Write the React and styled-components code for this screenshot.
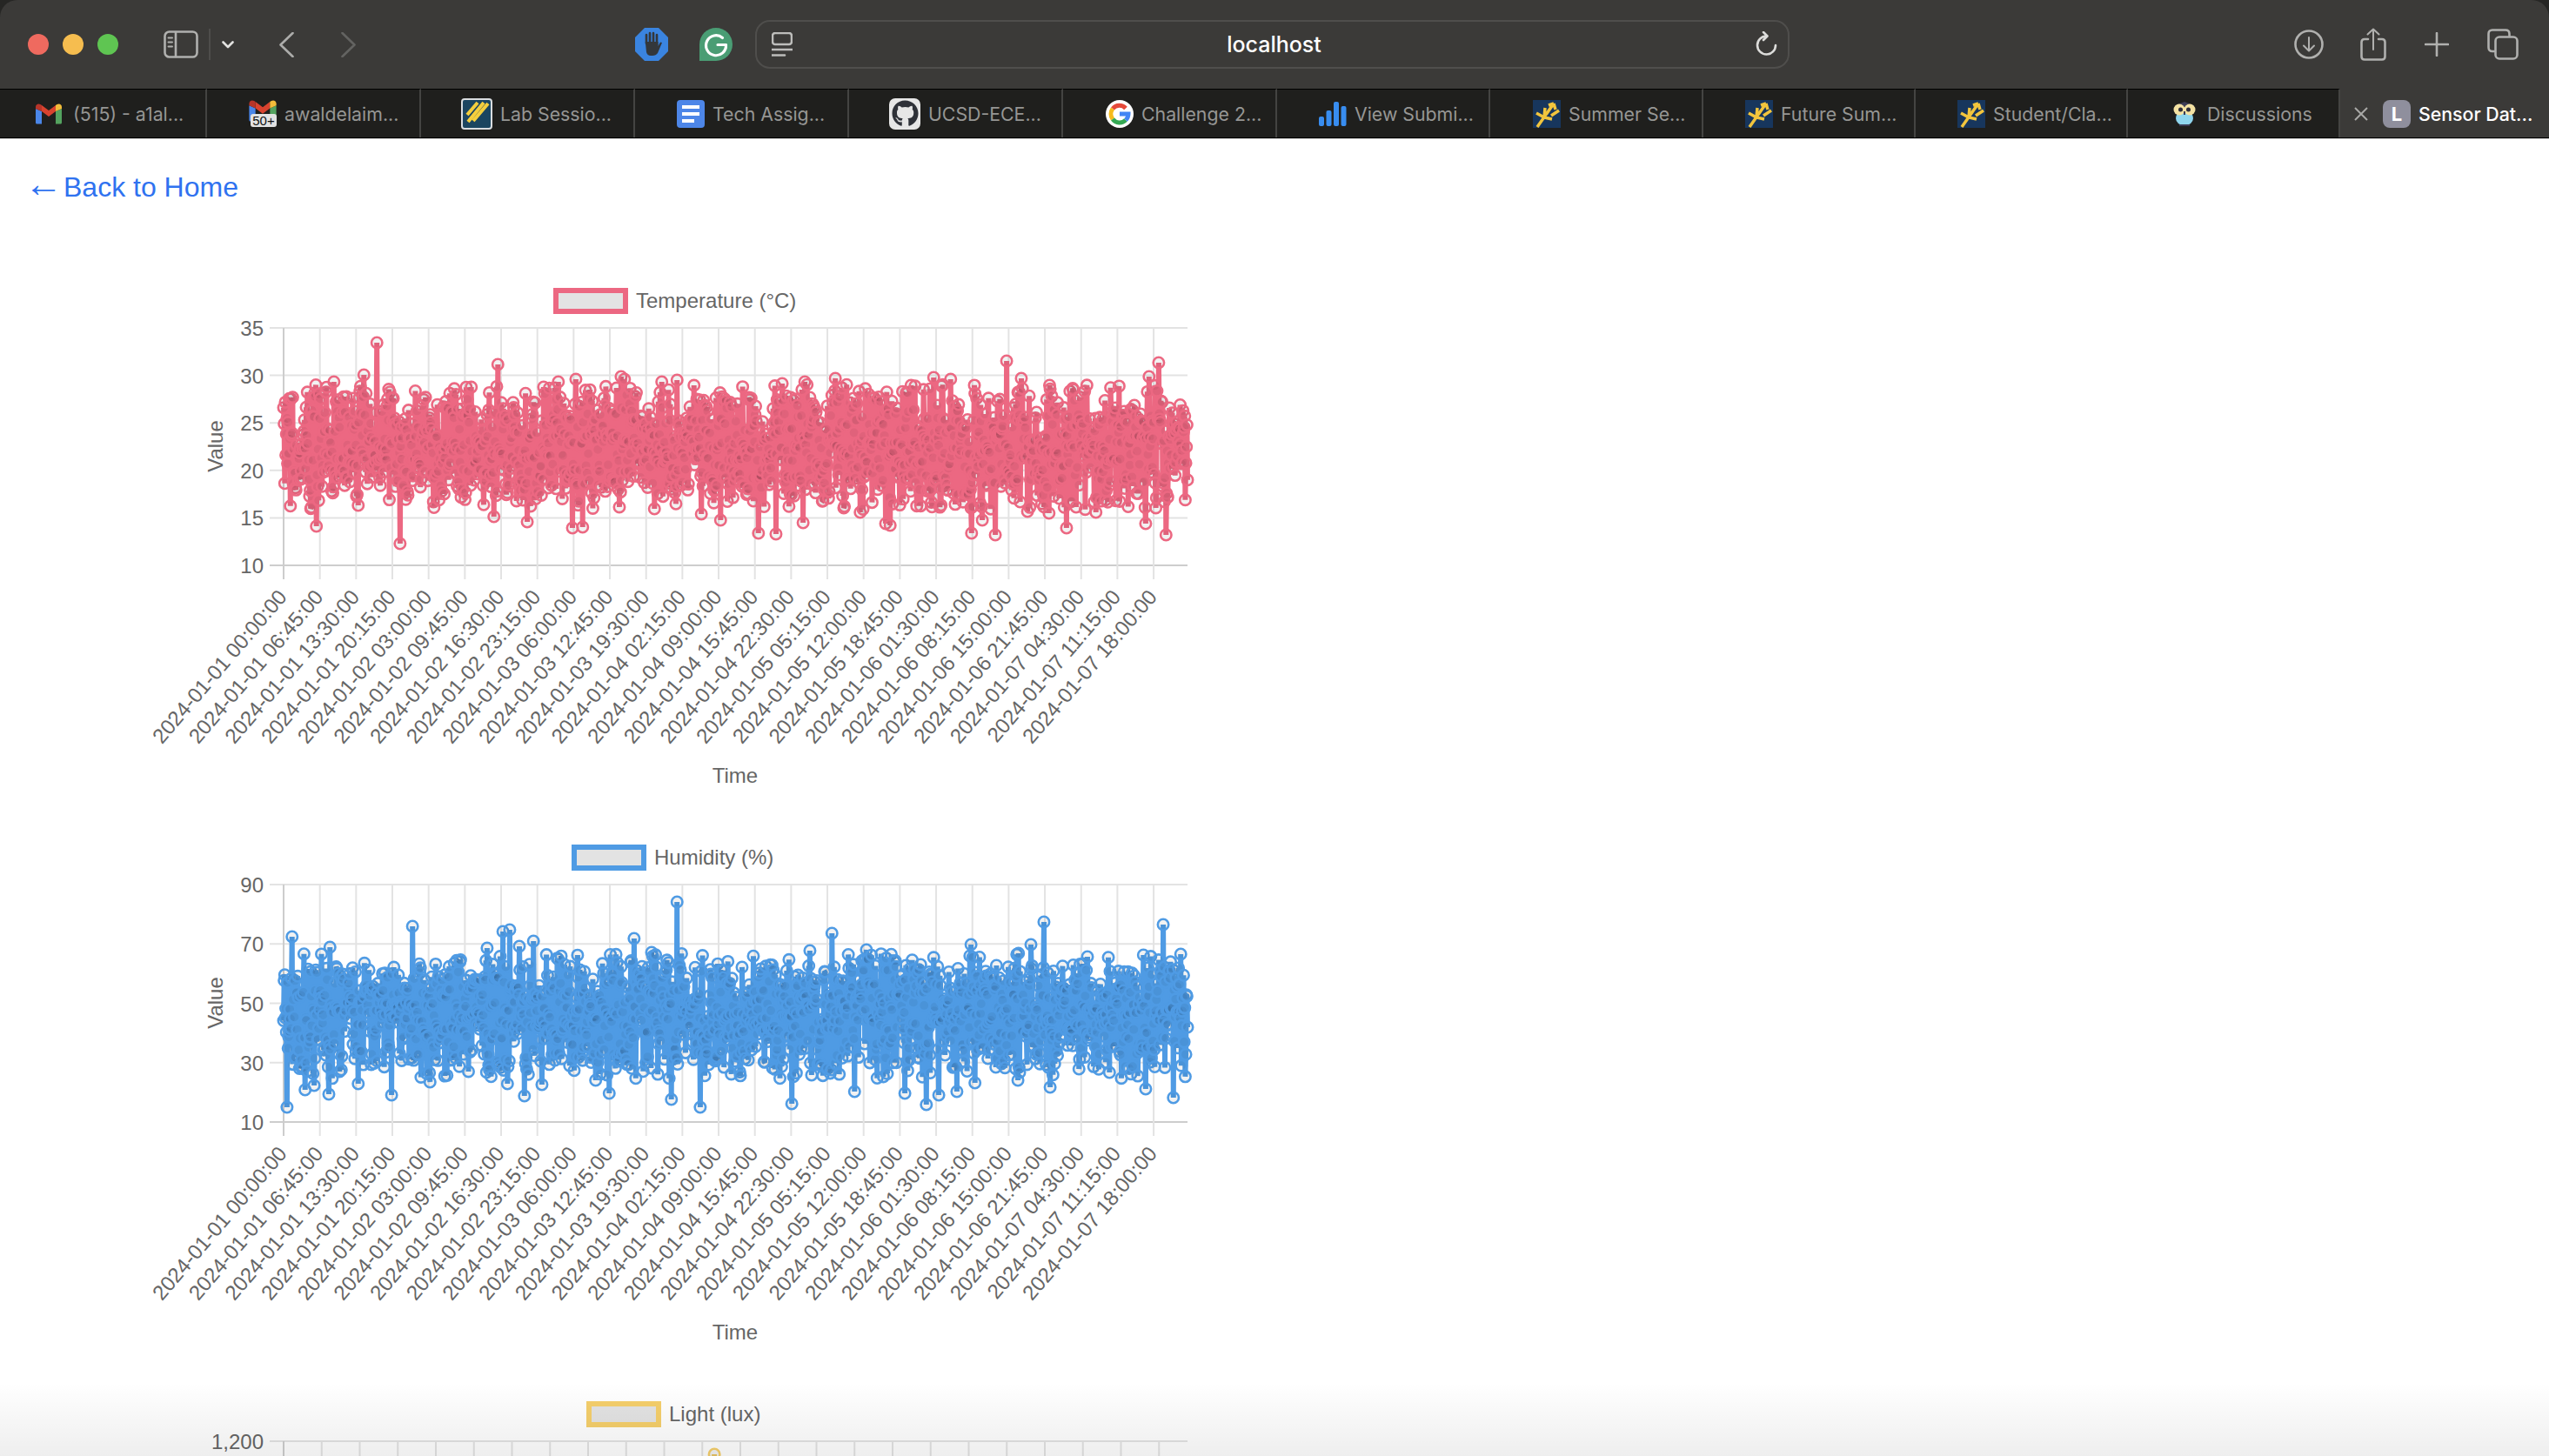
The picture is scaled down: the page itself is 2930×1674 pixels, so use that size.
import React, { useMemo } from "react";
import styled, { createGlobalStyle } from "styled-components";
import { FaGithub } from "react-icons/fa";

const GlobalStyle = createGlobalStyle`
    html, body {
        margin: 0;
        padding: 0;
        background: #ffffff;
        overflow: hidden;
    }
`;

const Window = styled.div`
    position: relative;
    display: flex;
    flex-direction: column;
    width: 2930px;
    height: 1674px;
    overflow: hidden;
    background: #262624;
    font-family: "Liberation Sans", Arial, sans-serif;
`;

const Toolbar = styled.header`
    flex: none;
    display: flex;
    align-items: center;
    height: 102px;
    padding-left: 32px;
    background: #3b3a38;
    border-radius: 20px 20px 0 0;
`;

const Lights = styled.div`
    display: flex;
    gap: 16px;
`;

const Light = styled.span`
    width: 24px;
    height: 24px;
    border-radius: 50%;
    background: ${props => props.$color};
`;

const ToolIcon = styled.svg`
    flex: none;
    display: block;
    margin-left: ${props => props.$left}px;
    fill: none;
    stroke: ${props => props.$stroke || "#b0b0ae"};
    stroke-width: 2.6;
    stroke-linecap: round;
    stroke-linejoin: round;
`;

const Divider = styled.span`
    flex: none;
    width: 2px;
    height: 36px;
    margin-left: 12px;
    background: #4e4d4b;
`;

const UrlBar = styled.div`
    flex: none;
    display: flex;
    align-items: center;
    box-sizing: border-box;
    width: 1189px;
    height: 56px;
    margin-left: 26px;
    padding: 0 11px 0 17px;
    border: 2px solid #4f4e4c;
    border-radius: 17px;
`;

const UrlText = styled.span`
    flex: 1;
    text-align: center;
    color: #ffffff;
    font-family: Inter, "Liberation Sans", sans-serif;
    font-size: 25px;
    font-weight: 500;
`;

const TabStrip = styled.nav`
    flex: none;
    display: grid;
    grid-template-columns: 238px 246px 246px 246px 246px 246px 245px 245px 244px 244px 244px 1fr;
    height: 57px;
    box-sizing: border-box;
    border-bottom: 1px solid #000000;
    box-shadow: 0 1px 0 #cfcfcf;
    z-index: 1;
`;

const Tab = styled.div`
    display: flex;
    align-items: center;
    gap: ${props => props.$gap || 9}px;
    min-width: 0;
    padding-left: ${props => props.$inset || 48}px;
    border-top: 1px solid ${props => (props.$active ? "#3b3a38" : "#000000")};
    border-right: ${props => (props.$active ? "none" : "2px solid #444442")};
    background: ${props => (props.$active ? "#3b3a38" : "#1f1f1d")};
    color: ${props => (props.$active ? "#ffffff" : "#969694")};
    font-family: Inter, "Liberation Sans", sans-serif;
    font-size: 21.3px;
    font-weight: ${props => (props.$active ? 500 : 400)};
    white-space: nowrap;
`;

const CloseMark = styled.svg`
    flex: none;
    margin-right: 8px;
    stroke: #a8a8a6;
    stroke-width: 2;
`;

const Favicon = styled.svg`
    flex: none;
    display: block;
`;

const GithubBadge = styled.span`
    flex: none;
    display: flex;
    align-items: center;
    justify-content: center;
    width: 36px;
    height: 36px;
    border-radius: 7px;
    background: #e6e6e6;
    color: #2e3138;
    font-size: 31px;
`;

const LetterBadge = styled.span`
    flex: none;
    display: flex;
    align-items: center;
    justify-content: center;
    width: 32px;
    height: 32px;
    border-radius: 8px;
    background: #8f8f9d;
    color: #ffffff;
    font-size: 22px;
    font-weight: 700;
`;

const MailBadge = styled.span`
    position: relative;
    flex: none;
    width: 32px;
    height: 31px;
`;

const MailCount = styled.span`
    position: absolute;
    left: 2px;
    bottom: 0;
    width: 30px;
    height: 15px;
    border-radius: 3px;
    background: #e2e2e2;
    color: #111111;
    font-family: "Liberation Sans", sans-serif;
    font-size: 15px;
    line-height: 15px;
    text-align: center;
`;

const Page = styled.main`
    flex: 1;
    min-height: 0;
    margin-top: 1px;
    overflow: hidden;
    background: #ffffff;
`;

const LinkRow = styled.div`
    box-sizing: border-box;
    height: 160px;
    padding: 37px 0 0 28px;
`;

const BackLink = styled.a`
    display: inline-flex;
    align-items: baseline;
    gap: 1px;
    color: #2f72f0;
    font-size: 32px;
    line-height: 37px;
    text-decoration: none;
`;

const BackArrow = styled.span`
    font-size: 44px;
    line-height: 0;
`;

const ChartSvg = styled.svg`
    display: block;
    width: 1400px;
    height: 640px;
`;

const ChartText = styled.text`
    fill: #666666;
    font-family: "Liberation Sans", Arial, sans-serif;
    font-size: 24px;
`;

const BottomFade = styled.div`
    position: absolute;
    left: 0;
    right: 0;
    bottom: 0;
    height: 84px;
    background: linear-gradient(rgba(0, 0, 0, 0), rgba(0, 0, 0, 0.065));
    pointer-events: none;
`;

const PLOT_LEFT = 326;
const PLOT_RIGHT = 1365;
const PLOT_TOP = 57;
const PLOT_BOTTOM = 330;
const POINTS = 1600;

function makeRandom(seed) {
    let state = seed;
    return () => {
        state = (state + 0x6d2b79f5) | 0;
        let t = Math.imul(state ^ (state >>> 15), 1 | state);
        t = (t + Math.imul(t ^ (t >>> 7), 61 | t)) ^ t;
        return ((t ^ (t >>> 14)) >>> 0) / 4294967296;
    };
}

// noisy band plus the spikes read off the screenshot, all in chart pixels
function buildSeries({ seed, mean, spread, low, high, peaks, pageTop }) {
    const random = makeRandom(seed);
    const step = (PLOT_RIGHT - PLOT_LEFT) / (POINTS - 1);
    const series = [];
    for (let i = 0; i < POINTS; i++) {
        let y = low - 1;
        while (y < low || y > high) {
            const gauss =
                Math.sqrt(-2 * Math.log(1 - random())) *
                Math.cos(2 * Math.PI * random());
            y = mean + gauss * spread;
        }
        series.push([PLOT_LEFT + i * step, y]);
    }
    peaks.forEach(([x, y]) => {
        const index = Math.round((x - PLOT_LEFT) / step);
        series[index] = [series[index][0], y - pageTop];
    });
    return series;
}

function buildTimeLabels() {
    const start = Date.UTC(2024, 0, 1);
    return Array.from({ length: 25 }, (_, i) =>
        new Date(start + i * 405 * 60000)
            .toISOString()
            .slice(0, 19)
            .replace("T", " ")
    );
}

const Chart = ({ title, color, legendLeft, ticks, gridStep, gridCount, labels, band }) => {
    const series = useMemo(() => buildSeries(band), [band]);
    const line = series.map(([x, y], i) => `${i ? "L" : "M"}${x.toFixed(1)} ${y.toFixed(1)}`).join("");

    return (
        <ChartSvg viewBox="0 0 1400 640">
            <rect x={legendLeft + 3} y="14" width="80" height="24" fill="#e3e3e3" stroke={color} strokeWidth="6" />
            <ChartText x={legendLeft + 95} y="34">{title}</ChartText>

            {ticks.map(tick => (
                <g key={tick.label}>
                    <line x1="310" x2={PLOT_RIGHT} y1={tick.y} y2={tick.y} stroke={tick.y === PLOT_BOTTOM ? "#cdcdcd" : "#e3e3e3"} strokeWidth="2" />
                    <ChartText x="303" y={tick.y + 9} textAnchor="end">{tick.label}</ChartText>
                </g>
            ))}
            {Array.from({ length: gridCount }, (_, i) => (
                <line
                    key={i}
                    x1={PLOT_LEFT + i * gridStep}
                    x2={PLOT_LEFT + i * gridStep}
                    y1={PLOT_TOP}
                    y2="346"
                    stroke={i === 0 ? "#cdcdcd" : "#e3e3e3"}
                    strokeWidth="2"
                />
            ))}

            <path d={line} fill="none" stroke={color} strokeWidth="6" strokeLinejoin="bevel" />
            {series.map(([x, y], i) => (
                <circle key={i} cx={x} cy={y} r="6.2" fill="rgba(0,0,0,0.05)" stroke={color} strokeWidth="2.6" />
            ))}

            {labels.map((label, i) => {
                const x = PLOT_LEFT + i * gridStep + 5;
                return (
                    <ChartText key={label} x={x} y="367" textAnchor="end" transform={`rotate(-49.5 ${x} 367)`}>
                        {label}
                    </ChartText>
                );
            })}
            {labels.length > 0 && (
                <>
                    <ChartText x="256" y="193" textAnchor="middle" transform="rotate(-90 256 193)">Value</ChartText>
                    <ChartText x="845" y="580" textAnchor="middle">Time</ChartText>
                </>
            )}
        </ChartSvg>
    );
};

const GmailIcon = ({ width = 30, height = 24 }) => (
    <Favicon width={width} height={height} viewBox="0 0 30 24">
        <path d="M0 6V22Q0 23.500 1.500 23.500H7V9Z" fill="#4a86e8" />
        <path d="M23 9V23.500H28.500Q30 23.500 30 22V6Z" fill="#54a35f" />
        <path d="M7 9L15 15L23 9V2L15 8L7 2Z" fill="#d8432f" />
        <path d="M0 6V4C0 1 3 -0.500 5.500 1L7 2V9Z" fill="#b7352a" />
        <path d="M30 6V4C30 1 27 -0.500 24.500 1L23 2V9Z" fill="#f3bc3a" />
    </Favicon>
);

const LabIcon = () => (
    <Favicon width="36" height="36" viewBox="0 0 36 36">
        <rect x="1" y="1" width="34" height="34" rx="3" fill="#1b4560" stroke="#d9dde0" strokeWidth="2" />
        <path d="M8 27L26 5M14 26L31 6M7 19L19 5" stroke="#f4cf3d" strokeWidth="4" />
    </Favicon>
);

const DocsIcon = () => (
    <Favicon width="32" height="32" viewBox="0 0 32 32">
        <rect width="32" height="32" rx="4" fill="#4d86e8" />
        <path d="M6 8H26M6 16H26M6 24H20" stroke="#ffffff" strokeWidth="4" />
    </Favicon>
);

const GoogleIcon = () => (
    <Favicon width="32" height="32" viewBox="0 0 32 32">
        <circle cx="16" cy="16" r="16" fill="#ffffff" />
        <path d="M23 9.500A10 10 0 0 0 8 10" fill="none" stroke="#e5493a" strokeWidth="5" />
        <path d="M8 10A10 10 0 0 0 8 22" fill="none" stroke="#f6bb1b" strokeWidth="5" />
        <path d="M8 22A10 10 0 0 0 23 23" fill="none" stroke="#34a853" strokeWidth="5" />
        <path d="M23 23A10 10 0 0 0 26 16H16" fill="none" stroke="#4285f4" strokeWidth="5" />
    </Favicon>
);

const BarsIcon = () => (
    <Favicon width="32" height="28" viewBox="0 0 32 28" fill="#388df0">
        <rect x="0" y="17" width="6" height="11" rx="2" />
        <rect x="8.500" y="10" width="6" height="18" rx="2" />
        <rect x="17" y="0" width="6" height="28" rx="2" />
        <rect x="25.500" y="5" width="6" height="23" rx="2" />
    </Favicon>
);

const TridentIcon = () => (
    <Favicon width="32" height="32" viewBox="0 0 32 32">
        <rect width="32" height="32" fill="#17365d" />
        <path d="M5 31L24 4M24 4L18 6M24 4L26 11M14 9L13 20L22 22M30 12L21 18M4 15L13 20" fill="none" stroke="#f2c53d" strokeWidth="3.500" />
    </Favicon>
);

const OwlIcon = () => (
    <Favicon width="28" height="29" viewBox="0 0 28 29">
        <path d="M3 5L14 1L25 5V15H3Z" fill="#3c3c54" />
        <ellipse cx="14" cy="20" rx="10" ry="8.500" fill="#8fd6ee" />
        <ellipse cx="8" cy="10" rx="6.500" ry="6.500" fill="#f4e2a2" />
        <ellipse cx="20" cy="10" rx="6.500" ry="6.500" fill="#f4e2a2" />
        <circle cx="9.500" cy="10" r="2.500" fill="#2d2d3c" />
        <circle cx="18.500" cy="10" r="2.500" fill="#2d2d3c" />
        <path d="M14 12V16M8 28H20" stroke="#3c3c54" strokeWidth="2" />
    </Favicon>
);

const TABS = [
    { title: "(515) - a1al...", icon: <GmailIcon />, inset: 41, gap: 13 },
    {
        title: "awaldelaim...",
        icon: (
            <MailBadge>
                <GmailIcon width={32} height={25} />
                <MailCount>50+</MailCount>
            </MailBadge>
        ),
    },
    { title: "Lab Sessio...", icon: <LabIcon />, inset: 46 },
    { title: "Tech Assig...", icon: <DocsIcon /> },
    { title: "UCSD-ECE...", icon: <GithubBadge><FaGithub /></GithubBadge>, inset: 46 },
    { title: "Challenge 2...", icon: <GoogleIcon />, inset: 49 },
    { title: "View Submi...", icon: <BarsIcon /> },
    { title: "Summer Se...", icon: <TridentIcon />, inset: 49 },
    { title: "Future Sum...", icon: <TridentIcon /> },
    { title: "Student/Cla...", icon: <TridentIcon /> },
    { title: "Discussions", icon: <OwlIcon />, inset: 51, gap: 12 },
];

const TEMP_PEAKS = [
    [433, 394], [572, 419], [460, 625], [364, 605], [658, 607], [670, 606], [872, 613], [892, 614],
    [418, 431], [714, 433], [718, 436], [384, 439], [662, 436], [761, 439], [778, 437], [899, 441],
    [625, 445], [642, 439], [606, 600], [568, 594], [806, 591], [828, 598], [1157, 415], [1332, 417],
    [960, 435], [1073, 434], [1093, 436], [1174, 435], [1321, 433], [989, 438], [925, 439], [1234, 448],
    [923, 601], [1018, 602], [1023, 604], [1117, 613], [1144, 615], [1340, 615], [1226, 607], [1317, 602],
    [1129, 598], [989, 589], [970, 584], [1181, 588], [1206, 590], [1260, 589],
];

const HUMIDITY_PEAKS = [
    [336, 1077], [379, 1089], [474, 1065], [578, 1071], [586, 1069], [613, 1082], [560, 1090], [597, 1088],
    [729, 1079], [778, 1037], [749, 1095], [330, 1273], [351, 1253], [361, 1248], [378, 1258], [412, 1246],
    [450, 1259], [494, 1244], [583, 1246], [603, 1260], [623, 1247], [700, 1257], [685, 1242], [772, 1264],
    [805, 1273], [1200, 1060], [1337, 1063], [956, 1073], [931, 1093], [996, 1092], [1116, 1086], [1185, 1086],
    [1171, 1096], [1357, 1097], [910, 1269], [982, 1255], [1040, 1257], [1065, 1270], [1079, 1259], [1100, 1255],
    [1317, 1252], [1349, 1262], [1207, 1250], [1170, 1242], [1121, 1245],
];

const TIME_LABELS = buildTimeLabels();

const CHARTS = [
    {
        title: "Temperature (°C)",
        color: "#ec6882",
        legendLeft: 636,
        gridStep: 41.67,
        gridCount: 25,
        labels: TIME_LABELS,
        ticks: ["35", "30", "25", "20", "15", "10"].map((label, i) => ({ label, y: PLOT_TOP + i * 54.6 })),
        band: { seed: 21, mean: 195, spread: 46, low: 122, high: 266, peaks: TEMP_PEAKS, pageTop: 320 },
    },
    {
        title: "Humidity (%)",
        color: "#4f9be4",
        legendLeft: 657,
        gridStep: 41.67,
        gridCount: 25,
        labels: TIME_LABELS,
        ticks: ["90", "70", "50", "30", "10"].map((label, i) => ({ label, y: PLOT_TOP + i * 68.25 })),
        band: { seed: 7, mean: 207, spread: 46, low: 136, high: 280, peaks: HUMIDITY_PEAKS, pageTop: 960 },
    },
    {
        title: "Light (lux)",
        color: "#f5cf6b",
        legendLeft: 674,
        gridStep: 43.75,
        gridCount: 24,
        labels: [],
        ticks: [{ label: "1,200", y: PLOT_TOP }],
        band: { seed: 3, mean: 240, spread: 20, low: 200, high: 300, peaks: [[821, 1672]], pageTop: 1600 },
    },
];

const App = () => {
    return (
        <Window>
            <GlobalStyle />
            <Toolbar>
                <Lights>
                    <Light $color="#ef6a5f" />
                    <Light $color="#f6bd4f" />
                    <Light $color="#5fc552" />
                </Lights>

                <ToolIcon $left={52} width="40" height="32" viewBox="0 0 40 32">
                    <rect x="1.500" y="1.500" width="37" height="29" rx="5" />
                    <path d="M14 2V30" />
                    <path d="M5.500 8.500H10M5.500 13.500H10M5.500 18.500H10" strokeWidth="2" />
                </ToolIcon>
                <Divider />
                <ToolIcon $left={13} $stroke="#e2e2e0" width="14" height="9" viewBox="0 0 14 9" strokeWidth="3">
                    <path d="M1.500 1.500L7 7L12.500 1.500" />
                </ToolIcon>
                <ToolIcon $left={52} $stroke="#acacaa" width="17" height="29" viewBox="0 0 17 29">
                    <path d="M15.500 1L1.500 14.500L15.500 28" />
                </ToolIcon>
                <ToolIcon $left={54} $stroke="#636361" width="17" height="29" viewBox="0 0 17 29">
                    <path d="M1.500 1L15.500 14.500L1.500 28" />
                </ToolIcon>

                <ToolIcon $left={321} $stroke="none" width="38" height="38" viewBox="0 0 38 38">
                    <path d="M11 0H27L38 11V27L27 38H11L0 27V11Z" fill="#3a84e0" />
                    <path d="M13 8V18M17 6V18M21 6V18M25 8V20" stroke="#33373b" strokeWidth="2.600" />
                    <path d="M11.800 16H26.500V21L29 16.500L31 17L26 29Q24 32 20 32H18Q14 32 13 28Z" fill="#33373b" />
                </ToolIcon>
                <ToolIcon $left={36} $stroke="none" width="38" height="38" viewBox="0 0 38 38">
                    <path d="M19 0A19 19 0 0 1 19 38H0V19A19 19 0 0 1 19 0Z" fill="#4a9d74" />
                    <path d="M26.500 11.500A11.500 11.500 0 1 0 30.500 19.500H21" fill="none" stroke="#ffffff" strokeWidth="3.200" />
                </ToolIcon>

                <UrlBar>
                    <ToolIcon $left={0} $stroke="#bdbdbb" width="24" height="28" viewBox="0 0 24 28" strokeWidth="2">
                        <rect x="1" y="1" width="22" height="13" rx="3" />
                        <path d="M0.500 20H23.500M0.500 26.500H15" />
                    </ToolIcon>
                    <UrlText>localhost</UrlText>
                    <ToolIcon $left={0} $stroke="#dcdcda" width="26" height="30" viewBox="0 0 26 30" strokeWidth="2">
                        <path d="M23 16A10.500 10.500 0 1 1 12.500 5.500M9 1L13.500 5.500L9 10" />
                    </ToolIcon>
                </UrlBar>

                <ToolIcon $left={580} width="34" height="34" viewBox="0 0 34 34">
                    <circle cx="17" cy="17" r="15.500" />
                    <path d="M17 9V24M11 18.500L17 24.500L23 18.500" strokeWidth="2" />
                </ToolIcon>
                <ToolIcon $left={42} width="30" height="38" viewBox="0 0 30 38">
                    <path d="M9 13H5Q1.500 13 1.500 16.500V33Q1.500 36.500 5 36.500H25Q28.500 36.500 28.500 33V16.500Q28.500 13 25 13H21" />
                    <path d="M15 25V1.500M8.500 7.500L15 1.500L21.500 7.500" strokeWidth="2" />
                </ToolIcon>
                <ToolIcon $left={44} width="28" height="28" viewBox="0 0 28 28">
                    <path d="M14 1V27M1 14H27" />
                </ToolIcon>
                <ToolIcon $left={44} width="36" height="36" viewBox="0 0 36 36">
                    <path d="M8 26H6Q1.500 26 1.500 21.500V6Q1.500 1.500 6 1.500H21Q25.500 1.500 25.500 6V8" />
                    <rect x="9.500" y="9.500" width="25" height="25" rx="4.500" />
                </ToolIcon>
            </Toolbar>

            <TabStrip>
                {TABS.map(tab => (
                    <Tab key={tab.title} $inset={tab.inset} $gap={tab.gap}>
                        {tab.icon}
                        <span>{tab.title}</span>
                    </Tab>
                ))}
                <Tab $active $inset={16}>
                    <CloseMark width="16" height="16" viewBox="0 0 16 16">
                        <path d="M1 1L15 15M15 1L1 15" />
                    </CloseMark>
                    <LetterBadge>L</LetterBadge>
                    <span>Sensor Dat...</span>
                </Tab>
            </TabStrip>

            <Page>
                <LinkRow>
                    <BackLink href="#home">
                        <BackArrow>←</BackArrow>
                        <span>Back to Home</span>
                    </BackLink>
                </LinkRow>
                {CHARTS.map(chart => (
                    <Chart key={chart.title} {...chart} />
                ))}
            </Page>
            <BottomFade />
        </Window>
    );
};

export default App;
